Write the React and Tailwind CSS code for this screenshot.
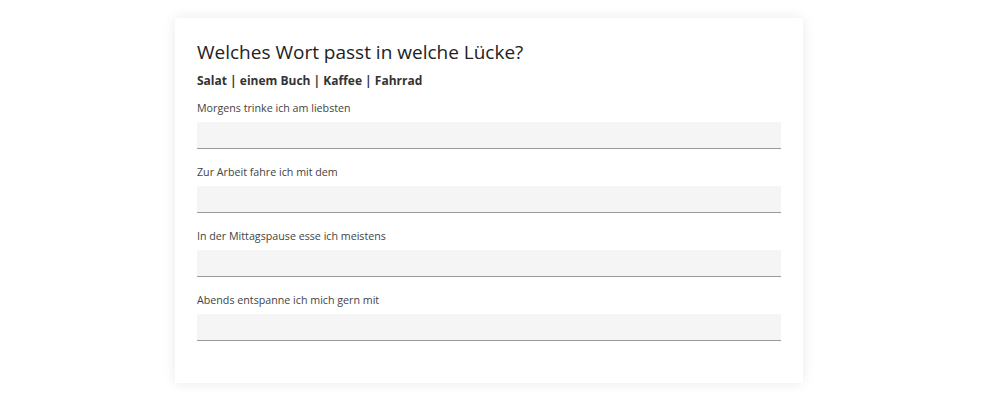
import React, { useState } from "react";

const items = [
  "Morgens trinke ich am liebsten",
  "Zur Arbeit fahre ich mit dem",
  "In der Mittagspause esse ich meistens",
  "Abends entspanne ich mich gern mit",
];

export default function App() {
  const [values, setValues] = useState(["", "", "", ""]);

  return (
    <div className="min-h-[404px] bg-white pt-[18px] font-['Open_Sans',sans-serif]">
      <div className="ml-[175px] w-[628px] bg-white px-[22px] pt-[20px] pb-[28px] shadow-[0_0_12px_rgba(0,0,0,0.09)]">
        <h2 className="text-[19px] leading-[28px] text-[#222]">
          Welches Wort passt in welche Lücke?
        </h2>
        <p className="mt-[5px] text-[12px] leading-[20px] font-bold text-[#333]">
          Salat | einem Buch | Kaffee | Fahrrad
        </p>

        <div className="mt-[8px]">
          {items.map((label, i) => (
            <div key={i} className="mb-[14px]">
              <label className="block text-[10.7px] leading-[18px] text-[#444]">
                {label}
              </label>
              <input
                type="text"
                value={values[i]}
                onChange={(e) => {
                  const next = [...values];
                  next[i] = e.target.value;
                  setValues(next);
                }}
                className="mt-[5px] block h-[27px] w-full border-b-[1.5px] border-[#9a9a9a] bg-[#f5f5f5] px-2 text-sm focus:outline-none"
              />
            </div>
          ))}
        </div>
      </div>
    </div>
  );
}
